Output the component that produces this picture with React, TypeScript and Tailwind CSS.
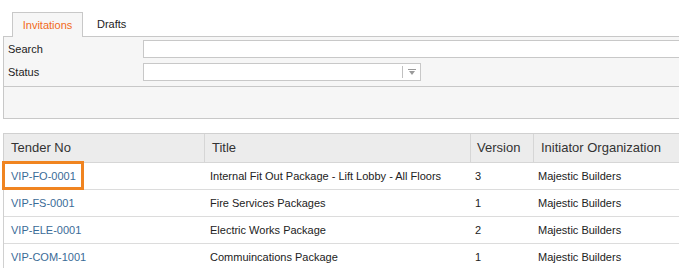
import React from "react";

const rows = [
  { no: "VIP-FO-0001", title: "Internal Fit Out Package - Lift Lobby - All Floors", ver: "3", org: "Majestic Builders" },
  { no: "VIP-FS-0001", title: "Fire Services Packages", ver: "1", org: "Majestic Builders" },
  { no: "VIP-ELE-0001", title: "Electric Works Package", ver: "2", org: "Majestic Builders" },
  { no: "VIP-COM-1001", title: "Commuincations Package", ver: "1", org: "Majestic Builders" },
];

export default function App() {
  return (
    <div
      className="w-[679px] h-[268px] overflow-hidden bg-white text-[#333]"
      style={{ fontFamily: '"Liberation Sans", Arial, Helvetica, sans-serif' }}
    >
      <div className="w-[900px] pt-[12px]">
        {/* Tabs */}
        <div className="flex ml-[12px] text-[11px]">
          <div className="relative z-10 -mb-px w-[71px] h-[25px] border border-b-0 border-[#c8c8c8] bg-[#f6f6f6] flex items-center justify-center text-[#f26a21]">
            Invitations
          </div>
          <div className="h-[24px] flex items-center pl-[14px] text-[#222]">Drafts</div>
        </div>

        {/* Filter panel */}
        <div className="ml-[3px] border-l border-t border-b border-[#c8c8c8] bg-[#f6f6f6] text-[11px]">
          <div className="pt-[3px] pb-[5px] pl-[4px] flex flex-col gap-[5px]">
            <div className="flex items-center">
              <div className="w-[135px] pt-px text-[#222]">Search</div>
              <div className="flex-1 h-[18px] border border-[#c8c8c8] bg-white" />
            </div>
            <div className="flex items-center">
              <div className="w-[135px] pt-px text-[#222]">Status</div>
              <div className="w-[278px] h-[18px] border border-[#c8c8c8] bg-white flex items-center justify-end">
                <div className="w-px h-[12px] bg-[#c0c0c0]" />
                <div className="w-[17px] flex items-center justify-center">
                  <svg width="8" height="7" viewBox="0 0 8 7">
                    <rect x="0" y="0" width="8" height="1" fill="#9a9a9a" />
                    <polygon points="1,2 7,2 4,6" fill="#9a9a9a" />
                  </svg>
                </div>
              </div>
            </div>
          </div>
          <div className="h-[32px] border-t border-[#c8c8c8]" />
        </div>

        {/* Table */}
        <div className="mt-[14px] ml-[3px] border-l border-t border-[#d0d0d0]">
          <div className="flex h-[29px] bg-[#ececec] border-b border-[#d6d6d6] text-[13px] text-[#333]">
            <div className="w-[201px] border-r border-[#d6d6d6] pl-[7px] flex items-center">Tender No</div>
            <div className="w-[266px] border-r border-[#d6d6d6] pl-[7px] flex items-center">Title</div>
            <div className="w-[63px] border-r border-[#d6d6d6] pl-[6px] flex items-center">Version</div>
            <div className="flex-1 pl-[7px] flex items-center">Initiator Organization</div>
          </div>
          {rows.map((r, i) => (
            <div key={r.no} className="flex h-[27px] border-b border-[#dcdcdc] text-[11px] text-[#222]">
              <div className="relative w-[201px] pl-[7px] pt-px flex items-center text-[#3a6b97]">
                {r.no}
                {i === 0 && (
                  <div className="absolute left-[-2px] top-[-2px] w-[82px] h-[29px] border-[3px] border-[#f08420]" />
                )}
              </div>
              <div className="w-[266px] pl-[5px] pt-px flex items-center">{r.title}</div>
              <div className="w-[63px] pl-[4px] pt-px flex items-center">{r.ver}</div>
              <div className="flex-1 pl-[4px] pt-px flex items-center">{r.org}</div>
            </div>
          ))}
        </div>
      </div>
    </div>
  );
}
